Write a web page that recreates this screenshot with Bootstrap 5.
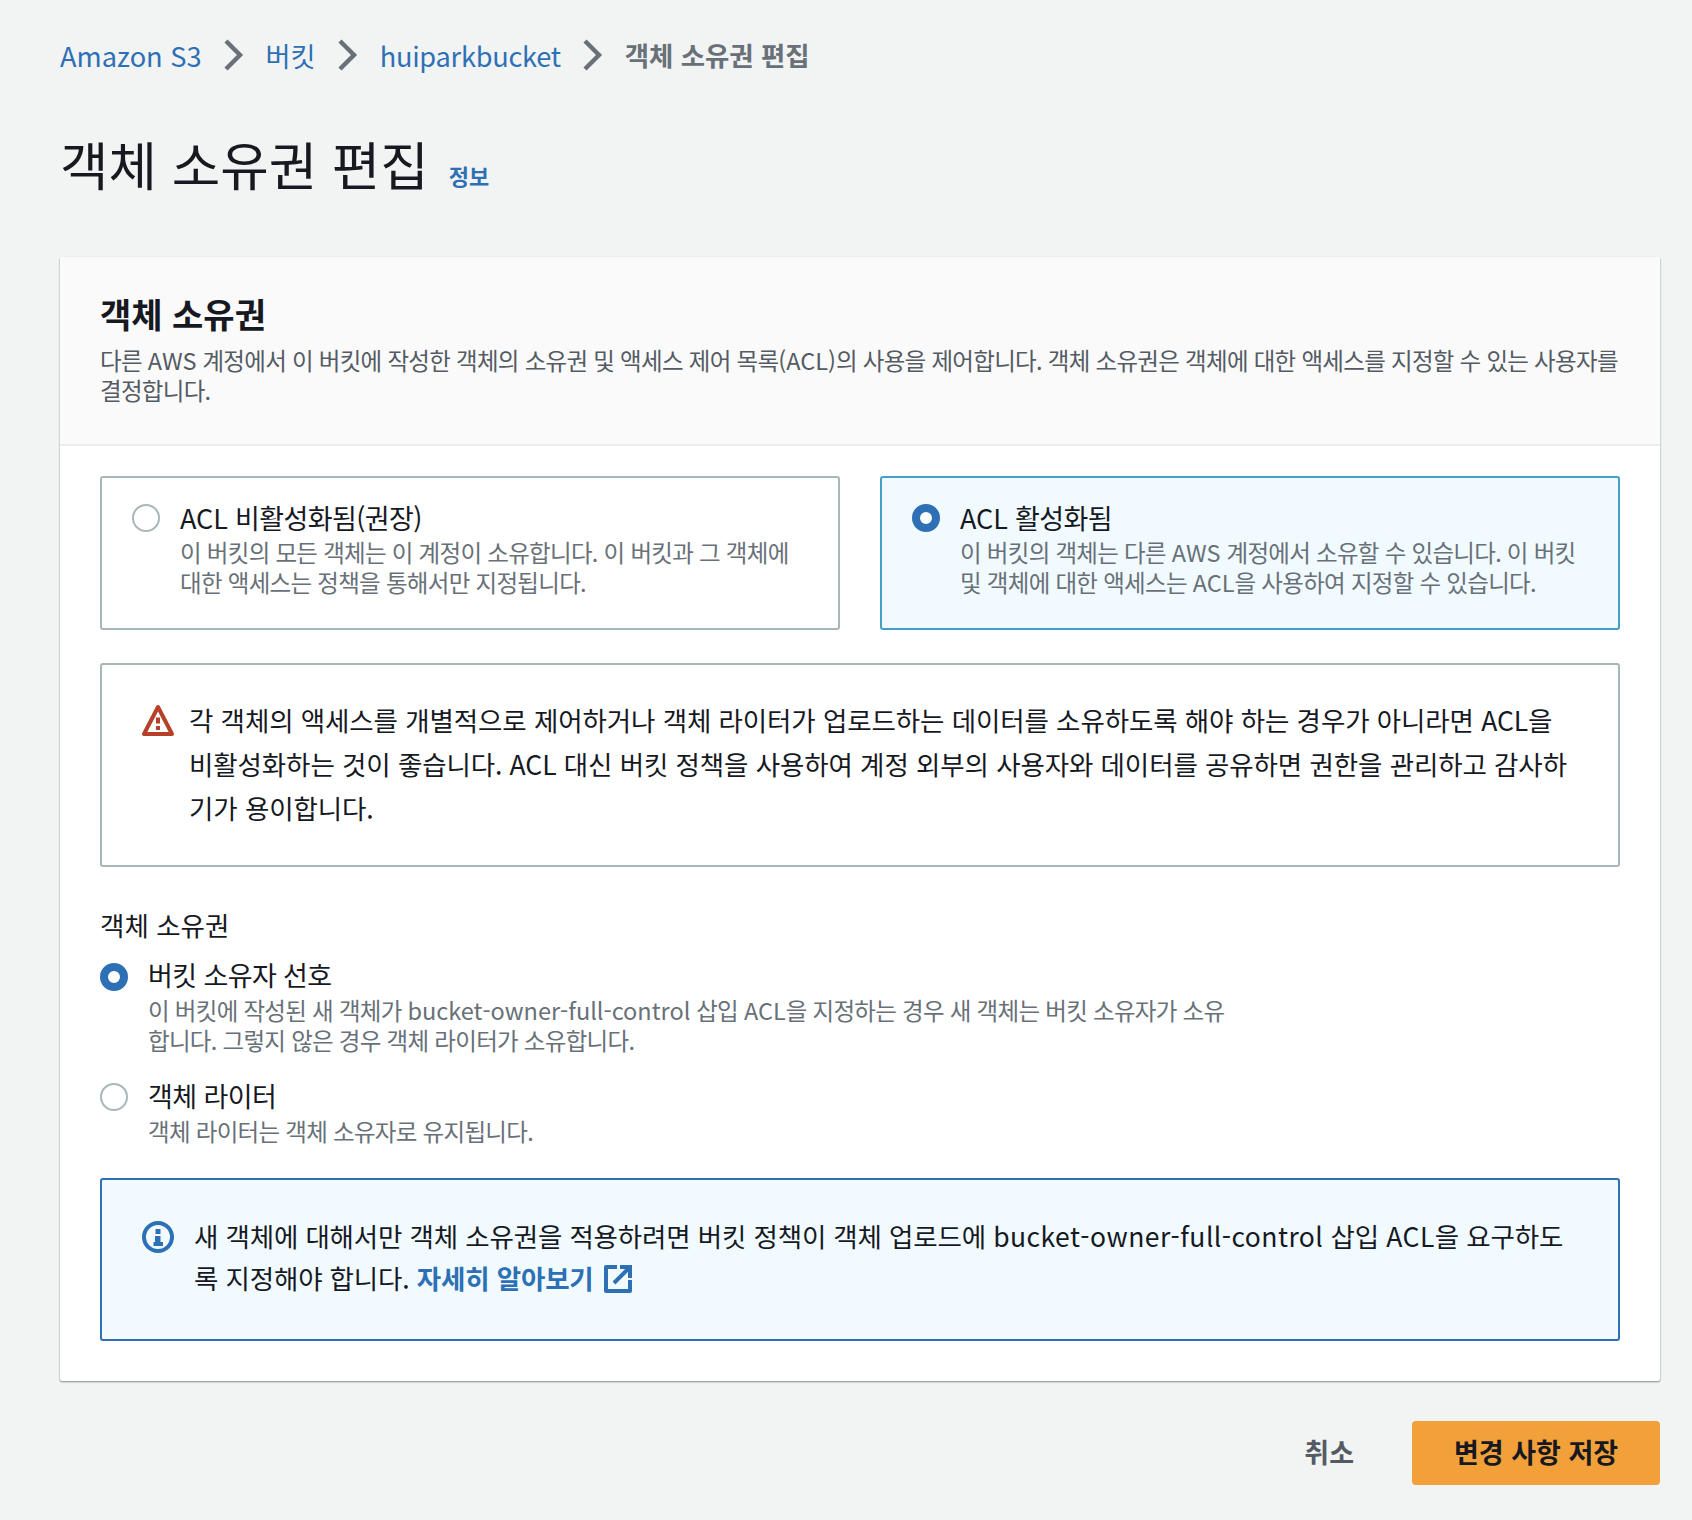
<!doctype html>
<html lang="ko">
<head>
<meta charset="utf-8">
<title>객체 소유권 편집</title>
<link href="https://cdn.jsdelivr.net/npm/bootstrap@5.3.0/dist/css/bootstrap.min.css" rel="stylesheet">
<style>
body{background:#f2f3f3;color:#16191f;font-family:"Noto Sans CJK KR","Noto Sans",sans-serif;font-size:26px;min-height:1520px}
.page-wrap{padding:35px 32px 0 60px}
a{text-decoration:none;color:#2e70b5}
.crumbs{font-size:27.2px;line-height:40px;height:40px;margin:0;gap:22px}
.crumbs .now{color:#687078;font-weight:700;font-size:26.4px}
.crumbs .tight{letter-spacing:-.25px}
.crumbs svg{width:20px;height:32px;display:block}
.page-title{font-size:52.7px;line-height:64px;font-weight:400;margin:0}
.info-link{font-size:22px;font-weight:700;line-height:30px;margin-left:20px;padding-top:24px}
.title-row{margin-top:56px;height:64px}
.panel{margin-top:62px;border:0;border-radius:2px;box-shadow:0 1px 2px rgba(0,28,36,.45),1px 1px 1px -1px rgba(0,28,36,.3),-1px 1px 1px -1px rgba(0,28,36,.3);height:1124px}
.panel-head{background:#fafafa;border-bottom:2px solid #eaeded;padding:29px 40px 0;height:189px;border-radius:2px 2px 0 0}
.panel-head h2{font-size:34px;font-weight:700;line-height:56px;margin:0}
.panel-head p{font-size:23.5px;letter-spacing:-.7px;line-height:30px;color:#545b64;margin:3px 0 0}
.panel-body{padding:30px 40px 0}
.tile-row{--bs-gutter-x:40px}
.tile{border:2px solid #aab7b8;border-radius:3px;height:154px;padding:21px 30px;gap:20px;background:#fff}
.tile-on{border-color:#44a0c8;background:#f1faff}
.dot{width:28px;height:28px;flex:none;margin:5px 0 0;border:2px solid #aab7b8;background:#fff;border-radius:50%;appearance:none}
.dot:checked{border:8px solid #2e70b5;background:#fff}
.opt-title{font-size:27px;letter-spacing:-.6px;line-height:38px}
.opt-desc{font-size:23.5px;letter-spacing:-.7px;line-height:30px;color:#687078}
.owner-opt .opt-desc{padding-top:1px}
.latin{letter-spacing:0}
.note{border:2px solid #aab7b8;border-radius:3px;background:#fff;margin-top:33px;height:204px;padding:33px 40px 0;gap:15px}
.note-icon{width:32px;height:32px;flex:none;margin-top:6px;display:block}
.note-text{font-size:26.5px;letter-spacing:-.1px;line-height:44px}
.field-label{font-size:26.5px;line-height:36px;margin-top:40px}
.owner-opt{gap:20px;margin-top:13px}
.owner-opt .dot{margin-top:7px}
.owner-opt+.owner-opt{margin-top:22px}
.owner-opt+.owner-opt .dot{margin-top:6px}
.info-box{border-color:#2e70b5;background:#f1faff;margin-top:32px;height:163px;padding:35px 40px 0;gap:20px}
.info-box .note-text{line-height:42px;letter-spacing:-.16px}
.info-box .latin{letter-spacing:.45px}
.info-box .note-icon{margin-top:6px}
.info-box a{font-weight:700}
.ext{display:inline-block;vertical-align:-4px;margin-left:10px;width:28px;height:28px}
.foot{margin-top:40px;gap:58px}
.btn-save{background:#f2a03a;border:0;border-radius:4px;width:248px;height:64px;font-size:27px;font-weight:700;color:#16191f;padding:0 0 2px}
.btn-cancel{font-size:27px;font-weight:700;color:#545b64;background:none;border:0;padding:0 0 2px}
</style>
</head>
<body>
<div class="page-wrap">
  <nav class="crumbs d-flex align-items-center" aria-label="breadcrumb">
    <a href="#">Amazon S3</a>
    <svg viewBox="0 0 20 32" fill="none" stroke="#687078" stroke-width="4.4"><path d="M2 2l14 14L2 30"/></svg>
    <a href="#">버킷</a>
    <svg viewBox="0 0 20 32" fill="none" stroke="#687078" stroke-width="4.4"><path d="M2 2l14 14L2 30"/></svg>
    <a class="tight" href="#">huiparkbucket</a>
    <svg viewBox="0 0 20 32" fill="none" stroke="#687078" stroke-width="4.4"><path d="M2 2l14 14L2 30"/></svg>
    <span class="now">객체 소유권 편집</span>
  </nav>
  <div class="title-row d-flex align-items-center">
    <h1 class="page-title">객체 소유권 편집</h1>
    <a class="info-link" href="#">정보</a>
  </div>
  <div class="card panel">
    <div class="panel-head">
      <h2>객체 소유권</h2>
      <p>다른 <span class="latin">AWS</span> 계정에서 이 버킷에 작성한 객체의 소유권 및 액세스 제어 목록<span class="latin">(ACL)</span>의 사용을 제어합니다. 객체 소유권은 객체에 대한 액세스를 지정할 수 있는 사용자를 결정합니다.</p>
    </div>
    <div class="panel-body">
      <div class="row tile-row">
        <div class="col-6">
          <label class="tile d-flex">
            <input class="dot" type="radio" name="acl">
            <span><span class="opt-title d-block"><span class="latin">ACL</span> 비활성화됨(권장)</span><span class="opt-desc d-block">이 버킷의 모든 객체는 이 계정이 소유합니다. 이 버킷과 그 객체에 대한 액세스는 정책을 통해서만 지정됩니다.</span></span>
          </label>
        </div>
        <div class="col-6">
          <label class="tile tile-on d-flex">
            <input class="dot" type="radio" name="acl" checked>
            <span><span class="opt-title d-block"><span class="latin">ACL</span> 활성화됨</span><span class="opt-desc d-block">이 버킷의 객체는 다른 <span class="latin">AWS</span> 계정에서 소유할 수 있습니다. 이 버킷 및 객체에 대한 액세스는 <span class="latin">ACL</span>을 사용하여 지정할 수 있습니다.</span></span>
          </label>
        </div>
      </div>
      <div class="note d-flex">
        <svg class="note-icon" viewBox="0 0 32 32" fill="none"><path d="M16 3L2 30h28z" stroke="#b7402a" stroke-width="4" stroke-linejoin="round"/><path d="M14 13.5h4v6h-4zM14 22h4v4h-4z" fill="#b7402a"/></svg>
        <div class="note-text">각 객체의 액세스를 개별적으로 제어하거나 객체 라이터가 업로드하는 데이터를 소유하도록 해야 하는 경우가 아니라면 ACL을 비활성화하는 것이 좋습니다. ACL 대신 버킷 정책을 사용하여 계정 외부의 사용자와 데이터를 공유하면 권한을 관리하고 감사하기가 용이합니다.</div>
      </div>
      <div class="field-label">객체 소유권</div>
      <label class="owner-opt d-flex">
        <input class="dot" type="radio" name="own" checked>
        <span><span class="opt-title d-block">버킷 소유자 선호</span><span class="opt-desc d-block">이 버킷에 작성된 새 객체가 <span class="latin">bucket-owner-full-control</span> 삽입 <span class="latin">ACL</span>을 지정하는 경우 새 객체는 버킷 소유자가 소유<br>합니다. 그렇지 않은 경우 객체 라이터가 소유합니다.</span></span>
      </label>
      <label class="owner-opt d-flex">
        <input class="dot" type="radio" name="own">
        <span><span class="opt-title d-block">객체 라이터</span><span class="opt-desc d-block">객체 라이터는 객체 소유자로 유지됩니다.</span></span>
      </label>
      <div class="note info-box d-flex">
        <svg class="note-icon" viewBox="0 0 32 32" fill="none"><circle cx="16" cy="16" r="14" stroke="#2e70b5" stroke-width="4"/><path d="M13.5 8h5v5h-5zM13 15h5.5v6H21v4h-9.5v-4H13z" fill="#2e70b5"/></svg>
        <div class="note-text">새 객체에 대해서만 객체 소유권을 적용하려면 버킷 정책이 객체 업로드에 <span class="latin">bucket-owner-full-control</span> 삽입 <span class="latin">ACL</span>을 요구하도록 지정해야 합니다. <a href="#">자세히 알아보기<svg class="ext" viewBox="0 0 28 28" fill="none" stroke="#2e70b5" stroke-width="4"><path d="M13 2H2v24h24V15" stroke-linejoin="round"/><path d="M16 2h10v11M26 2L10 18"/></svg></a></div>
      </div>
    </div>
  </div>
  <div class="foot d-flex justify-content-end align-items-center">
    <button class="btn-cancel btn" type="button">취소</button>
    <button class="btn-save btn" type="button">변경 사항 저장</button>
  </div>
</div>
<script src="https://cdn.jsdelivr.net/npm/bootstrap@5.3.0/dist/js/bootstrap.bundle.min.js"></script>
</body>
</html>
